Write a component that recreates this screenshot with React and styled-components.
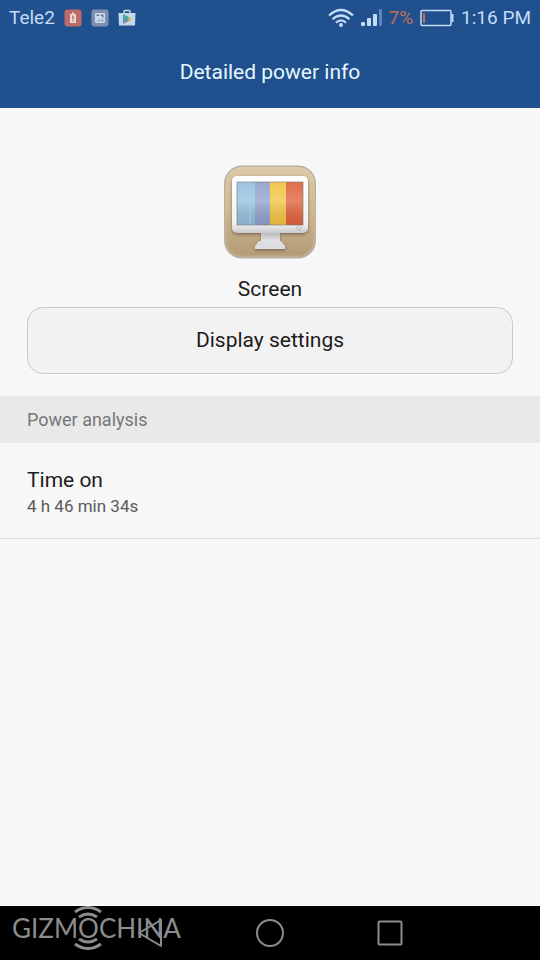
import React from 'react';
import styled, { createGlobalStyle } from 'styled-components';

const GlobalStyle = createGlobalStyle`
    * {
        box-sizing: border-box;
    }

    body {
        margin: 0;
        background-color: #f7f7f7;
        color: #1c1c1c;
        font-family: Roboto, "Noto Sans", sans-serif;
    }
`;

const Page = styled.div`
    display: flex;
    flex-direction: column;
    min-height: 100vh;
`;

const Top = styled.header`
    background-color: #20508d;
`;

const StatusBar = styled.div`
    display: flex;
    justify-content: space-between;
    align-items: center;
    height: 36px;
    padding: 0 9px;
    color: #c4dcf8;
    font-size: 19px;
    line-height: 36px;
`;

const StatusGroup = styled.div`
    display: flex;
    align-items: center;
    gap: ${props => props.$gap}px;

    svg {
        display: block;
    }
`;

const BatteryLevel = styled.span`
    color: #c07058;
    margin-left: -2px;
`;

const Title = styled.h1`
    margin: 0;
    color: #e6f8ff;
    font-size: 21px;
    font-weight: 400;
    line-height: 72px;
    text-align: center;
`;

const Main = styled.main`
    flex: 1;
`;

const AppInfo = styled.section`
    display: flex;
    flex-direction: column;
    align-items: center;
    padding: 56px 27px 22px;
`;

const AppName = styled.h2`
    margin: 14px 0 2px;
    font-size: 21px;
    font-weight: 400;
    line-height: 32px;
`;

const SettingsButton = styled.button`
    width: 100%;
    height: 67px;
    padding: 0 0 2px;
    border: 1px solid #cacaca;
    border-radius: 16px;
    background-color: #f2f2f2;
    color: inherit;
    font-family: inherit;
    font-size: 21px;
    cursor: pointer;
`;

const SectionTitle = styled.h2`
    margin: 0;
    padding: 0 27px;
    background-color: #e9e9e9;
    color: #777;
    font-size: 18px;
    font-weight: 400;
    line-height: 47px;
`;

const InfoList = styled.dl`
    margin: 0;
`;

const InfoRow = styled.div`
    padding: 23px 27px 20px;
    border-bottom: 1px solid #dcdcdc;
`;

const InfoLabel = styled.dt`
    font-size: 21px;
    line-height: 28px;
`;

const InfoValue = styled.dd`
    margin: 0;
    color: #5a5a5a;
    font-size: 17px;
    line-height: 24px;
`;

const NavBar = styled.nav`
    position: relative;
    display: flex;
    justify-content: center;
    height: 55px;
    border-top: 1px solid #fff;
    background-color: #000;
`;

const NavButton = styled.button`
    display: flex;
    justify-content: center;
    align-items: center;
    width: 120px;
    padding: 0;
    border: none;
    background: none;
    color: #8c8c8c;
    cursor: pointer;
`;

const Watermark = styled.div`
    position: absolute;
    left: 12px;
    top: 0;
    color: #8c8c8c;
    font-family: Lato, sans-serif;
    font-size: 26px;
    line-height: 44px;
    pointer-events: none;
`;

const Signal = styled.svg`
    position: absolute;
    left: 61px;
    top: 0;
`;

const AlertIcon = () => (
    <svg width="18" height="18" viewBox="0 0 18 18">
        <rect x="0.5" y="0.5" width="17" height="17" rx="3" fill="#bd6b68"/>
        <path d="M6 5h2V3.500h2V5h2v9H6z" fill="#ead9d2"/>
        <path d="M9 6.500v4M9 11.500v1" stroke="#a95450" strokeWidth="1.200"/>
    </svg>
);

const PictureIcon = () => (
    <svg width="18" height="18" viewBox="0 0 18 18">
        <rect x="0.5" y="0.5" width="17" height="17" rx="3" fill="#7c91b2"/>
        <rect x="4" y="4" width="10" height="10" rx="1" fill="#cbd9e9"/>
        <path d="M5 12.500l3-3 2 1.500 1.500-1.500 1.500 1.500v1.500z" fill="#a6b7ce"/>
        <path d="M5.500 5.500h3v1.500h-3zM10 5.500h2.500v3H11V7h-1z" fill="#62789c"/>
    </svg>
);

const PlayStoreIcon = () => (
    <svg width="18" height="18" viewBox="0 0 18 18">
        <path d="M6 4V2.500Q6 1.500 7 1.500h4q1 0 1 1V4" fill="none" stroke="#c5d8e8" strokeWidth="1.500"/>
        <path d="M0.500 4h17l-0.500 12.500H1z" fill="#c5d8e8"/>
        <path d="M5 5v10l4.500-5z" fill="#37a8bf"/>
        <path d="M5 5l6.500 3.500-2 1.500z" fill="#4ba572"/>
        <path d="M5 15l6.500-3.500-2-1.500z" fill="#a86770"/>
        <path d="M11.500 8.500L14 10l-2.500 1.500-2-1.500z" fill="#d7b456"/>
    </svg>
);

const WifiIcon = () => (
    <svg width="26" height="20" viewBox="0 0 26 20" fill="none" stroke="#c4dcf8" strokeWidth="2.200">
        <path d="M1 7.500Q13-3.500 25 7.500"/>
        <path d="M4.500 11.300q8.500-7.600 17 0"/>
        <path d="M8 14.600q5-4.400 10 0"/>
        <circle cx="13" cy="17" r="2" fill="#c4dcf8" stroke="none"/>
    </svg>
);

const SignalIcon = () => (
    <svg width="22" height="18" viewBox="0 0 22 18" fill="#c4dcf8">
        <rect x="0" y="13" width="4" height="4" rx="1"/>
        <rect x="6" y="9" width="4" height="8" rx="1"/>
        <rect x="12" y="5" width="4" height="12" rx="1"/>
        <rect x="18" y="0" width="3" height="17" rx="1" fill="#5d84b8"/>
    </svg>
);

const BatteryIcon = () => (
    <svg width="34" height="18" viewBox="0 0 34 18">
        <rect x="1" y="1.500" width="30" height="15" rx="1" fill="none" stroke="#c4dcf8" strokeWidth="1.500"/>
        <path d="M31.500 5h2v8h-2z" fill="#c4dcf8"/>
        <rect x="3" y="4" width="2" height="10" fill="#c07058"/>
    </svg>
);

const ScreenIcon = () => (
    <svg width="94" height="95" viewBox="0 0 94 95">
        <defs>
            <linearGradient id="case" x2="0" y2="1">
                <stop offset="0" stopColor="#dccaa7"/>
                <stop offset="0.5" stopColor="#cdb791"/>
                <stop offset="1" stopColor="#b39b76"/>
            </linearGradient>
            <linearGradient id="bezel" x2="0" y2="1">
                <stop offset="0" stopColor="#fff"/>
                <stop offset="0.85" stopColor="#efefef"/>
                <stop offset="1" stopColor="#c9c9cd"/>
            </linearGradient>
            <linearGradient id="stand" x2="0" y2="1">
                <stop offset="0" stopColor="#b4b4b8"/>
                <stop offset="1" stopColor="#ececee"/>
            </linearGradient>
            <linearGradient id="shine" x2="0" y2="1">
                <stop offset="0" stopColor="#fff" stopOpacity="0.1"/>
                <stop offset="0.45" stopColor="#fff" stopOpacity="0.25"/>
                <stop offset="1" stopColor="#444" stopOpacity="0.1"/>
            </linearGradient>
            <filter id="shadow" x="-20%" y="-20%" width="140%" height="150%">
                <feDropShadow dx="0" dy="1.500" stdDeviation="1.500" floodColor="#63503a" floodOpacity="0.700"/>
            </filter>
        </defs>
        <rect x="1" y="1.500" width="92" height="93" rx="18" fill="#b9b0a2"/>
        <rect x="2.500" y="3" width="89" height="89.500" rx="16.500" fill="url(#case)"/>
        <rect x="3" y="3.500" width="88" height="88.500" rx="16" fill="none" stroke="#eadcc0" strokeOpacity="0.25"/>
        <g filter="url(#shadow)">
            <path d="M38 68h19v10H38z" fill="url(#stand)"/>
            <path d="M36 77h22l4 5v3H32v-3z" fill="#dedee1"/>
            <rect x="9" y="12" width="76" height="57" rx="5" fill="url(#bezel)"/>
        </g>
        <path d="M14 18h18v43H14z" fill="#91bfdb"/>
        <path d="M32 18h15v43H32z" fill="#8e9dcb"/>
        <path d="M47 18h16v43H47z" fill="#f2c23c"/>
        <path d="M63 18h17v43H63z" fill="#df5d35"/>
        <rect x="14" y="18" width="66" height="43" fill="url(#shine)"/>
        <path d="M27 18v43" stroke="#a7cce1"/>
        <rect x="14" y="18" width="66" height="43" fill="none" stroke="#777" strokeOpacity="0.6"/>
        <circle cx="76" cy="64" r="2.300" fill="none" stroke="#b7b7b7"/>
    </svg>
);

const BackIcon = () => (
    <svg width="26" height="30" viewBox="0 0 26 30" fill="none" stroke="currentColor" strokeWidth="2" strokeLinejoin="round">
        <path d="M2 15L24 2v26z"/>
    </svg>
);

const HomeIcon = () => (
    <svg width="28" height="28" viewBox="0 0 28 28" fill="none" stroke="currentColor" strokeWidth="2">
        <circle cx="14" cy="14" r="13"/>
    </svg>
);

const RecentsIcon = () => (
    <svg width="26" height="26" viewBox="0 0 26 26" fill="none" stroke="currentColor" strokeWidth="2">
        <rect x="1.500" y="1.500" width="23" height="23" rx="1"/>
    </svg>
);

const details = [
    { label: 'Time on', value: '4 h 46 min 34s' }
];

const App = () => {
    return (
        <Page>
            <GlobalStyle/>
            <Top>
                <StatusBar>
                    <StatusGroup $gap={9}>
                        <span>Tele2</span>
                        <AlertIcon/>
                        <PictureIcon/>
                        <PlayStoreIcon/>
                    </StatusGroup>
                    <StatusGroup $gap={7}>
                        <WifiIcon/>
                        <SignalIcon/>
                        <BatteryLevel>7%</BatteryLevel>
                        <BatteryIcon/>
                        <span>1:16 PM</span>
                    </StatusGroup>
                </StatusBar>
                <Title>Detailed power info</Title>
            </Top>
            <Main>
                <AppInfo>
                    <ScreenIcon/>
                    <AppName>Screen</AppName>
                    <SettingsButton type="button">Display settings</SettingsButton>
                </AppInfo>
                <SectionTitle>Power analysis</SectionTitle>
                <InfoList>
                    {
                        details.map(({label, value}) => (
                            <InfoRow key={label}>
                                <InfoLabel>{label}</InfoLabel>
                                <InfoValue>{value}</InfoValue>
                            </InfoRow>
                        ))
                    }
                </InfoList>
            </Main>
            <NavBar>
                <NavButton type="button" aria-label="Back"><BackIcon/></NavButton>
                <NavButton type="button" aria-label="Home"><HomeIcon/></NavButton>
                <NavButton type="button" aria-label="Recents"><RecentsIcon/></NavButton>
                <Watermark>
                    GIZMOCHINA
                    <Signal width="30" height="44" viewBox="0 0 30 44" fill="none" stroke="currentColor" strokeWidth="3">
                        <path d="M2 6q13-9 26 0M6 11q9-6 18 0"/>
                        <path d="M2 38q13 9 26 0M6 33q9 6 18 0"/>
                    </Signal>
                </Watermark>
            </NavBar>
        </Page>
    );
}

export default App;
